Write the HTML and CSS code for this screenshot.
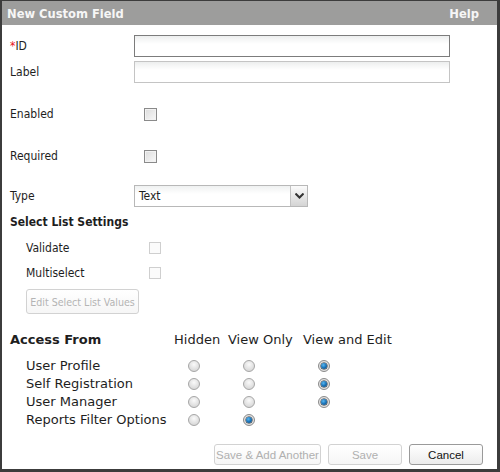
FILE: index.html
```html
<!DOCTYPE html>
<html>
<head>
<meta charset="utf-8">
<link rel="stylesheet" href="styles.css">
</head>
<body>
<div class="dialog">
  <div class="titlebar">
    <span class="title">New Custom Field</span>
    <span class="help">Help</span>
  </div>
  <div class="content">
    <div class="row r-id">
      <label class="lbl"><span class="req">*</span>ID</label>
      <div class="input focus"></div>
    </div>
    <div class="row r-label">
      <label class="lbl">Label</label>
      <div class="input"></div>
    </div>
    <div class="row r-enabled">
      <label class="lbl">Enabled</label>
      <span class="cb"></span>
    </div>
    <div class="row r-required">
      <label class="lbl">Required</label>
      <span class="cb"></span>
    </div>
    <div class="row r-type">
      <label class="lbl">Type</label>
      <div class="select"><span class="sel-text">Text</span><span class="sel-btn"><svg width="9" height="6" viewBox="0 0 9 6"><path d="M0.5 0.5 L4.5 4.5 L8.5 0.5" fill="none" stroke="#333" stroke-width="2"/></svg></span></div>
    </div>
    <div class="row r-heading">
      <span class="heading">Select List Settings</span>
    </div>
    <div class="row sub r-validate">
      <label class="sublbl">Validate</label>
      <span class="cb disabled"></span>
    </div>
    <div class="row sub r-multi">
      <label class="sublbl">Multiselect</label>
      <span class="cb disabled"></span>
    </div>
    <div class="row sub r-editbtn">
      <span class="btn small disabled">Edit Select List Values</span>
    </div>
    <div class="row access-head">
      <span class="access-title">Access From</span>
      <span class="col-h c-hidden">Hidden</span>
      <span class="col-h c-view">View Only</span>
      <span class="col-h">View and Edit</span>
    </div>
    <div class="radios">
      <div class="rrow"><span class="rlbl">User Profile</span><span class="rc c1"><span class="radio"></span></span><span class="rc c2"><span class="radio"></span></span><span class="rc"><span class="radio on"></span></span></div>
      <div class="rrow"><span class="rlbl">Self Registration</span><span class="rc c1"><span class="radio"></span></span><span class="rc c2"><span class="radio"></span></span><span class="rc"><span class="radio on"></span></span></div>
      <div class="rrow"><span class="rlbl">User Manager</span><span class="rc c1"><span class="radio"></span></span><span class="rc c2"><span class="radio"></span></span><span class="rc"><span class="radio on"></span></span></div>
      <div class="rrow"><span class="rlbl">Reports Filter Options</span><span class="rc c1"><span class="radio"></span></span><span class="rc c2"><span class="radio on"></span></span></div>
    </div>
    <div class="actions">
      <span class="btn disabled b-another">Save &amp; Add Another</span>
      <span class="btn disabled b-save">Save</span>
      <span class="btn b-cancel">Cancel</span>
    </div>
  </div>
</div>
</body>
</html>
```
FILE: styles.css
```css
html, body {
  margin: 0;
  padding: 0;
  background: #ffffff;
}
.dialog {
  width: 500px;
  height: 472px;
  box-sizing: border-box;
  border-style: solid;
  border-color: #3c3c3c;
  border-width: 1px 3px 3px 2px;
  background: #ffffff;
  font-family: "DejaVu Sans Condensed", "DejaVu Sans", sans-serif;
  font-size: 12px;
  color: #1e1e1e;
  display: flex;
  flex-direction: column;
}
.titlebar {
  height: 24px;
  background: #9d9d9c;
  display: flex;
  align-items: center;
  justify-content: space-between;
  padding: 0 18px 0 5px;
  color: #f6f6f6;
  font-weight: bold;
  font-size: 12.8px;
  flex: none;
}
.content {
  display: flex;
  flex-direction: column;
  padding-left: 8px;
}
.row {
  display: flex;
  align-items: center;
  flex: none;
}
.lbl {
  width: 124px;
  flex: none;
}
.req {
  color: #e8101a;
}
.r-id { margin-top: 10px; height: 22px; }
.r-label { margin-top: 4px; height: 22px; }
.r-enabled { margin-top: 20px; height: 22px; }
.r-required { margin-top: 20px; height: 22px; }
.r-type { margin-top: 18px; height: 22px; }
.r-heading { margin-top: 6px; height: 18px; }
.r-validate { margin-top: 8px; height: 18px; }
.r-multi { margin-top: 7px; height: 18px; }
.r-editbtn { margin-top: 7px; height: 25px; }

.input {
  width: 316px;
  height: 22px;
  box-sizing: border-box;
  border: 1px solid #c4c4c4;
  background: linear-gradient(#eceeee 0, #f6f7f7 4px, #ffffff 8px);
}
.input.focus {
  border-color: #7c7c7c;
}
.cb {
  width: 13px;
  height: 13px;
  box-sizing: border-box;
  border: 1px solid #8a8a8a;
  margin-left: 10px;
  background: linear-gradient(135deg, #dcdcdc, #f8f8f8);
  box-shadow: inset 0 0 0 1px #f2f2f2;
  flex: none;
}
.cb.disabled {
  width: 12px;
  height: 12px;
  margin-left: 0;
  border-color: #cfcfcf;
  background: #fbfbfb;
  box-shadow: none;
}
.select {
  width: 174px;
  height: 22px;
  box-sizing: border-box;
  border: 1px solid #b8b8b8;
  display: flex;
  background: linear-gradient(#eff1f1 0, #ffffff 8px);
}
.sel-text {
  flex: 1;
  padding-left: 4px;
  line-height: 20px;
}
.sel-btn {
  width: 17px;
  border-left: 1px solid #c2c2c2;
  background: linear-gradient(#fbfbfb, #d4d4d4);
  display: flex;
  align-items: flex-start;
  justify-content: center;
  padding-top: 7px;
  box-sizing: border-box;
}
.heading {
  font-weight: bold;
}
.sub {
  padding-left: 16px;
}
.sublbl {
  width: 123px;
  flex: none;
}
.btn {
  display: inline-flex;
  align-items: center;
  justify-content: center;
  box-sizing: border-box;
  border: 1px solid #a8a8a8;
  border-radius: 3px;
  background: linear-gradient(#ffffff, #ececec);
  font-family: "Liberation Sans", Arial, sans-serif;
  font-size: 11.5px;
  color: #111;
}
.btn.disabled {
  border-color: #d2d2d2;
  color: #b0b0b0;
  background: linear-gradient(#ffffff, #f6f6f6);
}
.btn.small {
  width: 113px;
  height: 25px;
  font-family: "DejaVu Sans Condensed", "DejaVu Sans", sans-serif;
  font-size: 10.6px;
  color: #b4b4b4;
}
.access-head {
  margin-top: 16px;
  height: 18px;
  font-family: "DejaVu Sans", sans-serif;
  font-size: 13px;
}
.access-title {
  width: 164px;
  font-weight: bold;
  flex: none;
}
.col-h {
  flex: none;
}
.c-hidden { width: 54px; }
.c-view { width: 75px; }
.radios {
  margin-top: 9px;
  padding-left: 16px;
  display: flex;
  flex-direction: column;
  font-family: "DejaVu Sans", sans-serif;
  font-size: 13px;
}
.rrow {
  height: 18px;
  display: flex;
  align-items: center;
}
.rlbl {
  width: 162px;
  flex: none;
  margin-top: -2px;
}
.rc {
  display: flex;
  align-items: center;
  flex: none;
}
.rc.c1 { width: 55px; }
.rc.c2 { width: 75px; }
.radio {
  width: 12px;
  height: 12px;
  box-sizing: border-box;
  border-radius: 50%;
  border: 1px solid #a6a6a6;
  background: radial-gradient(circle at 50% 35%, #fafafa 0, #e6e6e6 45%, #cfcfcf 100%);
  position: relative;
}
.radio.on {
  border-color: #8a8a8a;
  background: radial-gradient(circle, #f0f0f0 0, #d8d8d8 100%);
}
.radio.on::after {
  content: "";
  position: absolute;
  left: 2px;
  top: 2px;
  width: 6px;
  height: 6px;
  border-radius: 50%;
  background: radial-gradient(circle at 40% 35%, #5ab8f0 0, #1a73b8 50%, #0b3f6c 100%);
  box-shadow: 0 0 0 0.5px #2a2a2a;
}
.actions {
  margin-top: 15px;
  height: 21px;
  display: flex;
  padding-left: 204px;
}
.actions .btn {
  height: 21px;
}
.b-another { width: 107px; }
.b-save { width: 74px; margin-left: 7px; }
.b-cancel { width: 74px; margin-left: 7px; border-color: #9a9a9a; }
```
